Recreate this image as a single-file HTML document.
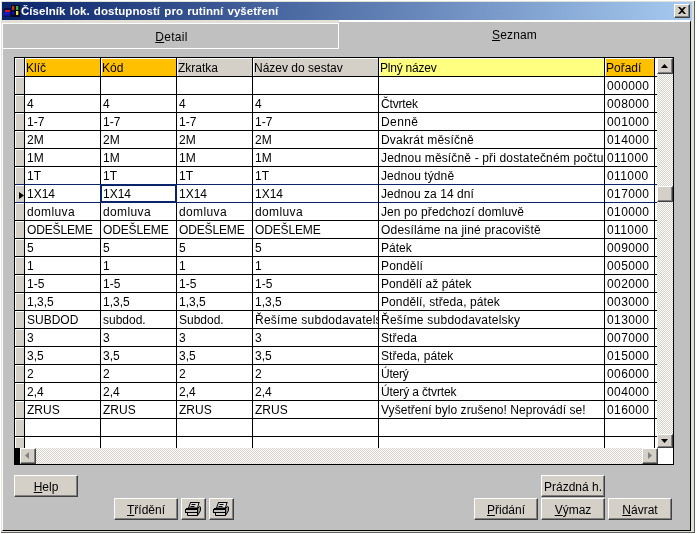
<!DOCTYPE html>
<html lang="cs"><head><meta charset="utf-8"><title>Číselník lok. dostupností pro rutinní vyšetření</title>
<style>
html,body{margin:0;padding:0;}
body{will-change:transform;width:697px;height:534px;overflow:hidden;background:#fff;font-family:"Liberation Sans",sans-serif;font-size:12px;color:#000;position:relative;}
div,span{position:absolute;box-sizing:border-box;}
.t{white-space:nowrap;overflow:hidden;line-height:17px;height:17px;}
u{text-decoration:underline;}
.btn{background:#d4d0c8;border-top:1px solid #fff;border-left:1px solid #fff;border-right:1px solid #404040;border-bottom:1px solid #404040;text-align:center;line-height:23px;font-size:12px;}
.btn:after{content:"";position:absolute;right:0;bottom:0;left:0;top:0;border-right:1px solid #808080;border-bottom:1px solid #808080;}
.sb{background:#d4d0c8;border-top:1px solid #fff;border-left:1px solid #fff;border-right:1px solid #404040;border-bottom:1px solid #404040;}
.sb:after{content:"";position:absolute;right:0;bottom:0;left:0;top:0;border-right:1px solid #808080;border-bottom:1px solid #808080;}
.dz{background:repeating-conic-gradient(#ffffff 0% 25%, #d4d0c8 0% 50%) 0 0/2px 2px;}
.hl{background:#000;height:1px;}
.vl{background:#000;width:1px;}
.hd{border-top:1px solid #fff;border-left:1px solid #fff;line-height:18px;padding-left:0px;white-space:nowrap;overflow:hidden;}
.rs{background:#d4d0c8;border-top:1px solid #fff;border-left:1px solid #fff;}
</style></head><body>

<div style="left:0;top:0;width:697px;height:534px;background:#fff"></div>
<div style="left:1px;top:1px;width:694px;height:532px;background:#606060"></div>
<div style="left:1px;top:1px;width:693px;height:531px;background:#e2e0d6"></div>
<div style="left:2px;top:2px;width:690px;height:18px;background:linear-gradient(90deg,#0a246a 0%,#a6caf0 100%)"></div>
<svg style="position:absolute;left:0px;top:0px" width="24" height="22" viewBox="0 0 24 22"><rect x="11" y="5" width="9" height="12" fill="#06061e"/><rect x="4" y="8" width="8" height="8.5" fill="#0a0a48"/><rect x="5" y="10" width="5" height="2" fill="#c81c20"/><rect x="4" y="12" width="6" height="3.600" fill="#1a1ab8"/><rect x="12" y="6" width="2.300" height="4" fill="#d03414"/><rect x="12" y="11.500" width="2.300" height="3" fill="#1414b0"/><rect x="16" y="6" width="2.300" height="4" fill="#30b838"/><rect x="16" y="11" width="2.300" height="4" fill="#e8e040"/></svg>
<div style="left:21px;top:2px;height:18px;line-height:18px;color:#fff;font-weight:bold;font-size:11.5px;white-space:nowrap;letter-spacing:0.04px;word-spacing:1px" id="ttl">Číselník lok. dostupností pro rutinní vyšetření</div>
<div class="btn" style="left:674px;top:4px;width:16px;height:14px"></div>
<svg style="position:absolute;left:678px;top:7px" width="8" height="7" viewBox="0 0 8 7"><path d="M0 0h2l2 2 2-2h2l-3 3.5 3 3.5h-2l-2-2-2 2h-2l3-3.5z" fill="#000"/></svg>
<div style="left:2px;top:23px;width:689px;height:508px;background:#c0c0c0;border-left:1px solid #fff;border-right:1px solid #000;border-bottom:1px solid #000"></div>
<div style="left:339px;top:20px;width:352px;height:4px;background:#c0c0c0;border-top:2px solid #fff;border-right:1px solid #000"></div>
<div style="left:2px;top:23px;width:337px;height:26px;border-top:1px solid #fff;border-right:1px solid #fff;border-bottom:1px solid #fff"></div>
<div style="left:3px;top:25px;width:337px;height:24px;line-height:24px;text-align:center;font-size:12px;letter-spacing:0.3px"><u>D</u>etail</div>
<div style="left:339px;top:22px;width:351px;height:26px;line-height:26px;text-align:center;font-size:12px;letter-spacing:0.15px"><u>S</u>eznam</div>
<div style="left:14px;top:57px;width:660px;height:408px;background:#fff"></div>
<div class="hd" style="left:25px;top:58px;width:75px;height:18px;background:#ffc000;">Klíč</div>
<div class="hd" style="left:101px;top:58px;width:75px;height:18px;background:#ffc000;">Kód</div>
<div class="hd" style="left:177px;top:58px;width:75px;height:18px;background:#d4d0c8;">Zkratka</div>
<div class="hd" style="left:253px;top:58px;width:125px;height:18px;background:#d4d0c8;">Název do sestav</div>
<div class="hd" style="left:379px;top:58px;width:225px;height:18px;background:#ffff80;letter-spacing:-0.222px;">Plný název</div>
<div class="hd" style="left:605px;top:58px;width:49px;height:18px;background:#ffc000;">Pořadí</div>
<div class="rs" style="left:15px;top:58px;width:9px;height:18px"></div>
<div class="rs" style="left:15px;top:77px;width:9px;height:17px"></div>
<div class="t" style="left:605px;top:78px;width:49px;padding-left:2px;letter-spacing:0.4px;">000000</div>
<div class="rs" style="left:15px;top:95px;width:9px;height:17px"></div>
<div class="t" style="left:25px;top:96px;width:75px;padding-left:2px;">4</div>
<div class="t" style="left:101px;top:96px;width:75px;padding-left:2px;">4</div>
<div class="t" style="left:177px;top:96px;width:75px;padding-left:2px;">4</div>
<div class="t" style="left:253px;top:96px;width:125px;padding-left:2px;">4</div>
<div class="t" style="left:379px;top:96px;width:225px;padding-left:2px;letter-spacing:-0.167px;">Čtvrtek</div>
<div class="t" style="left:605px;top:96px;width:49px;padding-left:2px;letter-spacing:0.4px;">008000</div>
<div class="rs" style="left:15px;top:113px;width:9px;height:17px"></div>
<div class="t" style="left:25px;top:114px;width:75px;padding-left:2px;">1-7</div>
<div class="t" style="left:101px;top:114px;width:75px;padding-left:2px;">1-7</div>
<div class="t" style="left:177px;top:114px;width:75px;padding-left:2px;">1-7</div>
<div class="t" style="left:253px;top:114px;width:125px;padding-left:2px;">1-7</div>
<div class="t" style="left:379px;top:114px;width:225px;padding-left:2px;letter-spacing:0.400px;">Denně</div>
<div class="t" style="left:605px;top:114px;width:49px;padding-left:2px;letter-spacing:0.4px;">001000</div>
<div class="rs" style="left:15px;top:131px;width:9px;height:17px"></div>
<div class="t" style="left:25px;top:132px;width:75px;padding-left:2px;">2M</div>
<div class="t" style="left:101px;top:132px;width:75px;padding-left:2px;">2M</div>
<div class="t" style="left:177px;top:132px;width:75px;padding-left:2px;">2M</div>
<div class="t" style="left:253px;top:132px;width:125px;padding-left:2px;">2M</div>
<div class="t" style="left:379px;top:132px;width:225px;padding-left:2px;letter-spacing:0.193px;">Dvakrát měsíčně</div>
<div class="t" style="left:605px;top:132px;width:49px;padding-left:2px;letter-spacing:0.4px;">014000</div>
<div class="rs" style="left:15px;top:149px;width:9px;height:17px"></div>
<div class="t" style="left:25px;top:150px;width:75px;padding-left:2px;">1M</div>
<div class="t" style="left:101px;top:150px;width:75px;padding-left:2px;">1M</div>
<div class="t" style="left:177px;top:150px;width:75px;padding-left:2px;">1M</div>
<div class="t" style="left:253px;top:150px;width:125px;padding-left:2px;">1M</div>
<div class="t" style="left:379px;top:150px;width:225px;padding-left:2px;letter-spacing:0.150px;">Jednou měsíčně - při dostatečném počtu vzorků</div>
<div class="t" style="left:605px;top:150px;width:49px;padding-left:2px;letter-spacing:0.4px;">011000</div>
<div class="rs" style="left:15px;top:167px;width:9px;height:17px"></div>
<div class="t" style="left:25px;top:168px;width:75px;padding-left:2px;">1T</div>
<div class="t" style="left:101px;top:168px;width:75px;padding-left:2px;">1T</div>
<div class="t" style="left:177px;top:168px;width:75px;padding-left:2px;">1T</div>
<div class="t" style="left:253px;top:168px;width:125px;padding-left:2px;">1T</div>
<div class="t" style="left:379px;top:168px;width:225px;padding-left:2px;letter-spacing:0.091px;">Jednou týdně</div>
<div class="t" style="left:605px;top:168px;width:49px;padding-left:2px;letter-spacing:0.4px;">011000</div>
<div class="rs" style="left:15px;top:185px;width:9px;height:17px"></div>
<div class="t" style="left:25px;top:186px;width:75px;padding-left:2px;">1X14</div>
<div class="t" style="left:101px;top:186px;width:75px;padding-left:2px;">1X14</div>
<div class="t" style="left:177px;top:186px;width:75px;padding-left:2px;">1X14</div>
<div class="t" style="left:253px;top:186px;width:125px;padding-left:2px;">1X14</div>
<div class="t" style="left:379px;top:186px;width:225px;padding-left:2px;letter-spacing:0.047px;">Jednou za 14 dní</div>
<div class="t" style="left:605px;top:186px;width:49px;padding-left:2px;letter-spacing:0.4px;">017000</div>
<div class="rs" style="left:15px;top:203px;width:9px;height:17px"></div>
<div class="t" style="left:25px;top:204px;width:75px;padding-left:2px;letter-spacing:0.383px;">domluva</div>
<div class="t" style="left:101px;top:204px;width:75px;padding-left:2px;letter-spacing:0.383px;">domluva</div>
<div class="t" style="left:177px;top:204px;width:75px;padding-left:2px;letter-spacing:0.383px;">domluva</div>
<div class="t" style="left:253px;top:204px;width:125px;padding-left:2px;letter-spacing:0.383px;">domluva</div>
<div class="t" style="left:379px;top:204px;width:225px;padding-left:2px;letter-spacing:0.096px;">Jen po předchozí domluvě</div>
<div class="t" style="left:605px;top:204px;width:49px;padding-left:2px;letter-spacing:0.4px;">010000</div>
<div class="rs" style="left:15px;top:221px;width:9px;height:17px"></div>
<div class="t" style="left:25px;top:222px;width:75px;padding-left:2px;letter-spacing:-0.143px;">ODEŠLEME</div>
<div class="t" style="left:101px;top:222px;width:75px;padding-left:2px;letter-spacing:-0.143px;">ODEŠLEME</div>
<div class="t" style="left:177px;top:222px;width:75px;padding-left:2px;letter-spacing:-0.143px;">ODEŠLEME</div>
<div class="t" style="left:253px;top:222px;width:125px;padding-left:2px;letter-spacing:-0.143px;">ODEŠLEME</div>
<div class="t" style="left:379px;top:222px;width:225px;padding-left:2px;letter-spacing:0.185px;">Odesíláme na jiné pracoviště</div>
<div class="t" style="left:605px;top:222px;width:49px;padding-left:2px;letter-spacing:0.4px;">011000</div>
<div class="rs" style="left:15px;top:239px;width:9px;height:17px"></div>
<div class="t" style="left:25px;top:240px;width:75px;padding-left:2px;">5</div>
<div class="t" style="left:101px;top:240px;width:75px;padding-left:2px;">5</div>
<div class="t" style="left:177px;top:240px;width:75px;padding-left:2px;">5</div>
<div class="t" style="left:253px;top:240px;width:125px;padding-left:2px;">5</div>
<div class="t" style="left:379px;top:240px;width:225px;padding-left:2px;">Pátek</div>
<div class="t" style="left:605px;top:240px;width:49px;padding-left:2px;letter-spacing:0.4px;">009000</div>
<div class="rs" style="left:15px;top:257px;width:9px;height:17px"></div>
<div class="t" style="left:25px;top:258px;width:75px;padding-left:2px;">1</div>
<div class="t" style="left:101px;top:258px;width:75px;padding-left:2px;">1</div>
<div class="t" style="left:177px;top:258px;width:75px;padding-left:2px;">1</div>
<div class="t" style="left:253px;top:258px;width:125px;padding-left:2px;">1</div>
<div class="t" style="left:379px;top:258px;width:225px;padding-left:2px;letter-spacing:0.200px;">Pondělí</div>
<div class="t" style="left:605px;top:258px;width:49px;padding-left:2px;letter-spacing:0.4px;">005000</div>
<div class="rs" style="left:15px;top:275px;width:9px;height:17px"></div>
<div class="t" style="left:25px;top:276px;width:75px;padding-left:2px;">1-5</div>
<div class="t" style="left:101px;top:276px;width:75px;padding-left:2px;">1-5</div>
<div class="t" style="left:177px;top:276px;width:75px;padding-left:2px;">1-5</div>
<div class="t" style="left:253px;top:276px;width:125px;padding-left:2px;">1-5</div>
<div class="t" style="left:379px;top:276px;width:225px;padding-left:2px;letter-spacing:0.067px;">Pondělí až pátek</div>
<div class="t" style="left:605px;top:276px;width:49px;padding-left:2px;letter-spacing:0.4px;">002000</div>
<div class="rs" style="left:15px;top:293px;width:9px;height:17px"></div>
<div class="t" style="left:25px;top:294px;width:75px;padding-left:2px;">1,3,5</div>
<div class="t" style="left:101px;top:294px;width:75px;padding-left:2px;">1,3,5</div>
<div class="t" style="left:177px;top:294px;width:75px;padding-left:2px;">1,3,5</div>
<div class="t" style="left:253px;top:294px;width:125px;padding-left:2px;">1,3,5</div>
<div class="t" style="left:379px;top:294px;width:225px;padding-left:2px;letter-spacing:0.095px;">Pondělí, středa, pátek</div>
<div class="t" style="left:605px;top:294px;width:49px;padding-left:2px;letter-spacing:0.4px;">003000</div>
<div class="rs" style="left:15px;top:311px;width:9px;height:17px"></div>
<div class="t" style="left:25px;top:312px;width:75px;padding-left:2px;">SUBDOD</div>
<div class="t" style="left:101px;top:312px;width:75px;padding-left:2px;">subdod.</div>
<div class="t" style="left:177px;top:312px;width:75px;padding-left:2px;">Subdod.</div>
<div class="t" style="left:253px;top:312px;width:125px;padding-left:2px;letter-spacing:0.238px;">Řešíme subdodavatelsky</div>
<div class="t" style="left:379px;top:312px;width:225px;padding-left:2px;letter-spacing:0.238px;">Řešíme subdodavatelsky</div>
<div class="t" style="left:605px;top:312px;width:49px;padding-left:2px;letter-spacing:0.4px;">013000</div>
<div class="rs" style="left:15px;top:329px;width:9px;height:17px"></div>
<div class="t" style="left:25px;top:330px;width:75px;padding-left:2px;">3</div>
<div class="t" style="left:101px;top:330px;width:75px;padding-left:2px;">3</div>
<div class="t" style="left:177px;top:330px;width:75px;padding-left:2px;">3</div>
<div class="t" style="left:253px;top:330px;width:125px;padding-left:2px;">3</div>
<div class="t" style="left:379px;top:330px;width:225px;padding-left:2px;letter-spacing:0.120px;">Středa</div>
<div class="t" style="left:605px;top:330px;width:49px;padding-left:2px;letter-spacing:0.4px;">007000</div>
<div class="rs" style="left:15px;top:347px;width:9px;height:17px"></div>
<div class="t" style="left:25px;top:348px;width:75px;padding-left:2px;">3,5</div>
<div class="t" style="left:101px;top:348px;width:75px;padding-left:2px;">3,5</div>
<div class="t" style="left:177px;top:348px;width:75px;padding-left:2px;">3,5</div>
<div class="t" style="left:253px;top:348px;width:125px;padding-left:2px;">3,5</div>
<div class="t" style="left:379px;top:348px;width:225px;padding-left:2px;letter-spacing:0.083px;">Středa, pátek</div>
<div class="t" style="left:605px;top:348px;width:49px;padding-left:2px;letter-spacing:0.4px;">015000</div>
<div class="rs" style="left:15px;top:365px;width:9px;height:17px"></div>
<div class="t" style="left:25px;top:366px;width:75px;padding-left:2px;">2</div>
<div class="t" style="left:101px;top:366px;width:75px;padding-left:2px;">2</div>
<div class="t" style="left:177px;top:366px;width:75px;padding-left:2px;">2</div>
<div class="t" style="left:253px;top:366px;width:125px;padding-left:2px;">2</div>
<div class="t" style="left:379px;top:366px;width:225px;padding-left:2px;letter-spacing:-0.250px;">Úterý</div>
<div class="t" style="left:605px;top:366px;width:49px;padding-left:2px;letter-spacing:0.4px;">006000</div>
<div class="rs" style="left:15px;top:383px;width:9px;height:17px"></div>
<div class="t" style="left:25px;top:384px;width:75px;padding-left:2px;">2,4</div>
<div class="t" style="left:101px;top:384px;width:75px;padding-left:2px;">2,4</div>
<div class="t" style="left:177px;top:384px;width:75px;padding-left:2px;">2,4</div>
<div class="t" style="left:253px;top:384px;width:125px;padding-left:2px;">2,4</div>
<div class="t" style="left:379px;top:384px;width:225px;padding-left:2px;letter-spacing:-0.129px;">Úterý a čtvrtek</div>
<div class="t" style="left:605px;top:384px;width:49px;padding-left:2px;letter-spacing:0.4px;">004000</div>
<div class="rs" style="left:15px;top:401px;width:9px;height:17px"></div>
<div class="t" style="left:25px;top:402px;width:75px;padding-left:2px;">ZRUS</div>
<div class="t" style="left:101px;top:402px;width:75px;padding-left:2px;">ZRUS</div>
<div class="t" style="left:177px;top:402px;width:75px;padding-left:2px;">ZRUS</div>
<div class="t" style="left:253px;top:402px;width:125px;padding-left:2px;">ZRUS</div>
<div class="t" style="left:379px;top:402px;width:225px;padding-left:2px;letter-spacing:0.044px;">Vyšetření bylo zrušeno! Neprovádí se!</div>
<div class="t" style="left:605px;top:402px;width:49px;padding-left:2px;letter-spacing:0.4px;">016000</div>
<div class="rs" style="left:15px;top:419px;width:9px;height:17px"></div>
<div class="rs" style="left:15px;top:437px;width:9px;height:11px"></div>
<div class="hl" style="left:14px;top:57px;width:660px"></div>
<div class="hl" style="left:14px;top:76px;width:643px;background:#000"></div>
<div class="hl" style="left:14px;top:94px;width:643px;background:#000"></div>
<div class="hl" style="left:14px;top:112px;width:643px;background:#000"></div>
<div class="hl" style="left:14px;top:130px;width:643px;background:#000"></div>
<div class="hl" style="left:14px;top:148px;width:643px;background:#000"></div>
<div class="hl" style="left:14px;top:166px;width:643px;background:#000"></div>
<div class="hl" style="left:14px;top:184px;width:643px;background:#0a246a"></div>
<div class="hl" style="left:14px;top:202px;width:643px;background:#0a246a"></div>
<div class="hl" style="left:14px;top:220px;width:643px;background:#000"></div>
<div class="hl" style="left:14px;top:238px;width:643px;background:#000"></div>
<div class="hl" style="left:14px;top:256px;width:643px;background:#000"></div>
<div class="hl" style="left:14px;top:274px;width:643px;background:#000"></div>
<div class="hl" style="left:14px;top:292px;width:643px;background:#000"></div>
<div class="hl" style="left:14px;top:310px;width:643px;background:#000"></div>
<div class="hl" style="left:14px;top:328px;width:643px;background:#000"></div>
<div class="hl" style="left:14px;top:346px;width:643px;background:#000"></div>
<div class="hl" style="left:14px;top:364px;width:643px;background:#000"></div>
<div class="hl" style="left:14px;top:382px;width:643px;background:#000"></div>
<div class="hl" style="left:14px;top:400px;width:643px;background:#000"></div>
<div class="hl" style="left:14px;top:418px;width:643px;background:#000"></div>
<div class="hl" style="left:14px;top:436px;width:643px;background:#000"></div>
<div class="vl" style="left:14px;top:57px;height:391px"></div>
<div class="vl" style="left:24px;top:57px;height:391px"></div>
<div class="vl" style="left:100px;top:57px;height:391px"></div>
<div class="vl" style="left:176px;top:57px;height:391px"></div>
<div class="vl" style="left:252px;top:57px;height:391px"></div>
<div class="vl" style="left:378px;top:57px;height:391px"></div>
<div class="vl" style="left:604px;top:57px;height:391px"></div>
<div class="vl" style="left:654px;top:57px;height:391px"></div>
<div style="left:100px;top:184px;width:77px;height:19px;border:2px solid #0a246a"></div>
<svg style="position:absolute;left:19px;top:192px" width="5" height="7" viewBox="0 0 5 7"><path d="M0 0L5 3.500L0 7z" fill="#000"/></svg>
<div class="dz" style="left:657px;top:58px;width:16px;height:390px"></div>
<div class="sb" style="left:657px;top:58px;width:16px;height:16px"></div>
<svg style="position:absolute;left:661px;top:64px" width="7" height="4" viewBox="0 0 7 4"><path d="M0 4L3.5 0L7 4z" fill="#000"/></svg>
<div class="sb" style="left:657px;top:434px;width:16px;height:14px"></div>
<svg style="position:absolute;left:661px;top:439px" width="7" height="4" viewBox="0 0 7 4"><path d="M0 0L3.5 4L7 0z" fill="#000"/></svg>
<div class="sb" style="left:657px;top:186px;width:16px;height:16px"></div>
<div class="dz" style="left:14px;top:448px;width:644px;height:16px"></div>
<div style="left:14px;top:448px;width:6px;height:16px;background:#000"></div>
<div class="sb" style="left:20px;top:448px;width:16px;height:16px"></div>
<svg style="position:absolute;left:25px;top:452px" width="4" height="7" viewBox="0 0 4 7"><path d="M4 0L0 3.5L4 7z" fill="#808080"/></svg>
<div class="sb" style="left:642px;top:448px;width:16px;height:16px"></div>
<svg style="position:absolute;left:648px;top:452px" width="4" height="7" viewBox="0 0 4 7"><path d="M0 0L4 3.5L0 7z" fill="#808080"/></svg>
<div style="left:658px;top:448px;width:15px;height:16px;background:#fff"></div>
<div class="hl" style="left:14px;top:464px;width:660px"></div>
<div class="vl" style="left:673px;top:57px;height:408px"></div>
<div class="btn" style="left:14px;top:475px;width:64px;height:22px"><u>H</u>elp</div>
<div class="btn" style="left:114px;top:498px;width:64px;height:22px"><u>T</u>řídění</div>
<div class="btn" style="left:181px;top:498px;width:25px;height:22px"></div>
<div class="btn" style="left:209px;top:498px;width:25px;height:22px"></div>
<div class="btn" style="left:541px;top:475px;width:64px;height:22px">Prázdná h.</div>
<div class="btn" style="left:474px;top:498px;width:64px;height:22px"><u>P</u>řidání</div>
<div class="btn" style="left:541px;top:498px;width:64px;height:22px"><u>V</u>ýmaz</div>
<div class="btn" style="left:608px;top:498px;width:64px;height:22px"><u>N</u>ávrat</div>
<svg style="position:absolute;left:183px;top:500px" width="20" height="17" viewBox="0 0 20 17"><path d="M7.500 2.500H16L14.500 8H5.500Z" fill="#dcdad4" stroke="#000"/><path d="M7 2.500H16.500M8.500 4.500H12.500M7.500 6.500H11.500" stroke="#000" fill="none"/><path d="M14.500 8.500L16.500 6.500L17.500 7V10.500L14.500 15.500Z" fill="#8c8a86" stroke="#000"/><rect x="3" y="8" width="12" height="2" fill="#000"/><rect x="3" y="10" width="11.500" height="2" fill="#c4c2bc"/><path d="M2.500 9V13M14.500 9V15M2 12.500H15" stroke="#000" fill="none"/><path d="M4.500 13V15.500H14.500" stroke="#000" fill="none"/></svg>
<svg style="position:absolute;left:211px;top:500px" width="20" height="17" viewBox="0 0 20 17"><path d="M7.500 2.500H16L14.500 8H5.500Z" fill="#dcdad4" stroke="#000"/><path d="M7 2.500H16.500M8.500 4.500H12.500M7.500 6.500H11.500" stroke="#000" fill="none"/><path d="M14.500 8.500L16.500 6.500L17.500 7V10.500L14.500 15.500Z" fill="#8c8a86" stroke="#000"/><rect x="3" y="8" width="12" height="2" fill="#000"/><rect x="3" y="10" width="11.500" height="2" fill="#c4c2bc"/><path d="M2.500 9V13M14.500 9V15M2 12.500H15" stroke="#000" fill="none"/><path d="M4.500 13V15.500H14.500" stroke="#000" fill="none"/></svg>
</body></html>
